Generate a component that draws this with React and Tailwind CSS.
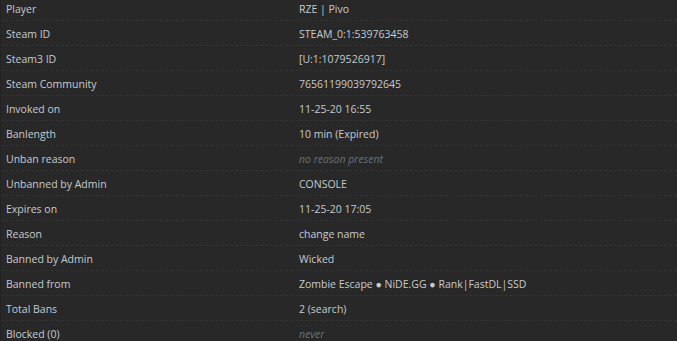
import React from 'react';

const rows = [
  { label: 'Player', value: 'RZE | Pivo' },
  { label: 'Steam ID', value: 'STEAM_0:1:539763458' },
  { label: 'Steam3 ID', value: '[U:1:1079526917]' },
  { label: 'Steam Community', value: '76561199039792645' },
  { label: 'Invoked on', value: '11-25-20 16:55' },
  { label: 'Banlength', value: '10 min (Expired)' },
  { label: 'Unban reason', value: 'no reason present', muted: true },
  { label: 'Unbanned by Admin', value: 'CONSOLE' },
  { label: 'Expires on', value: '11-25-20 17:05' },
  { label: 'Reason', value: 'change name' },
  { label: 'Banned by Admin', value: 'Wicked' },
  { label: 'Banned from', value: 'Zombie Escape \u25CF NiDE.GG \u25CF Rank|FastDL|SSD' },
  { label: 'Total Bans', value: '2 (search)' },
  { label: 'Blocked (0)', value: 'never', muted: true },
];

export default function App() {
  return (
    <div
      className="w-[677px] h-[341px] overflow-hidden bg-[#282828] border-l border-[#232323] text-[10.5px] text-[#c6cbd0]"
      style={{ fontFamily: '"Open Sans", "Noto Sans", sans-serif' }}
    >
      <div className="-mt-[4px] flex flex-col">
        {rows.map((r) => (
          <div
            key={r.label}
            className="h-[25px] flex items-center pt-[4px] border-b border-dashed border-[#333333]"
          >
            <div className="w-[298px] pl-[5px] shrink-0">{r.label}</div>
            <div className={r.muted ? 'italic text-[#67717d]' : ''}>{r.value}</div>
          </div>
        ))}
      </div>
    </div>
  );
}
